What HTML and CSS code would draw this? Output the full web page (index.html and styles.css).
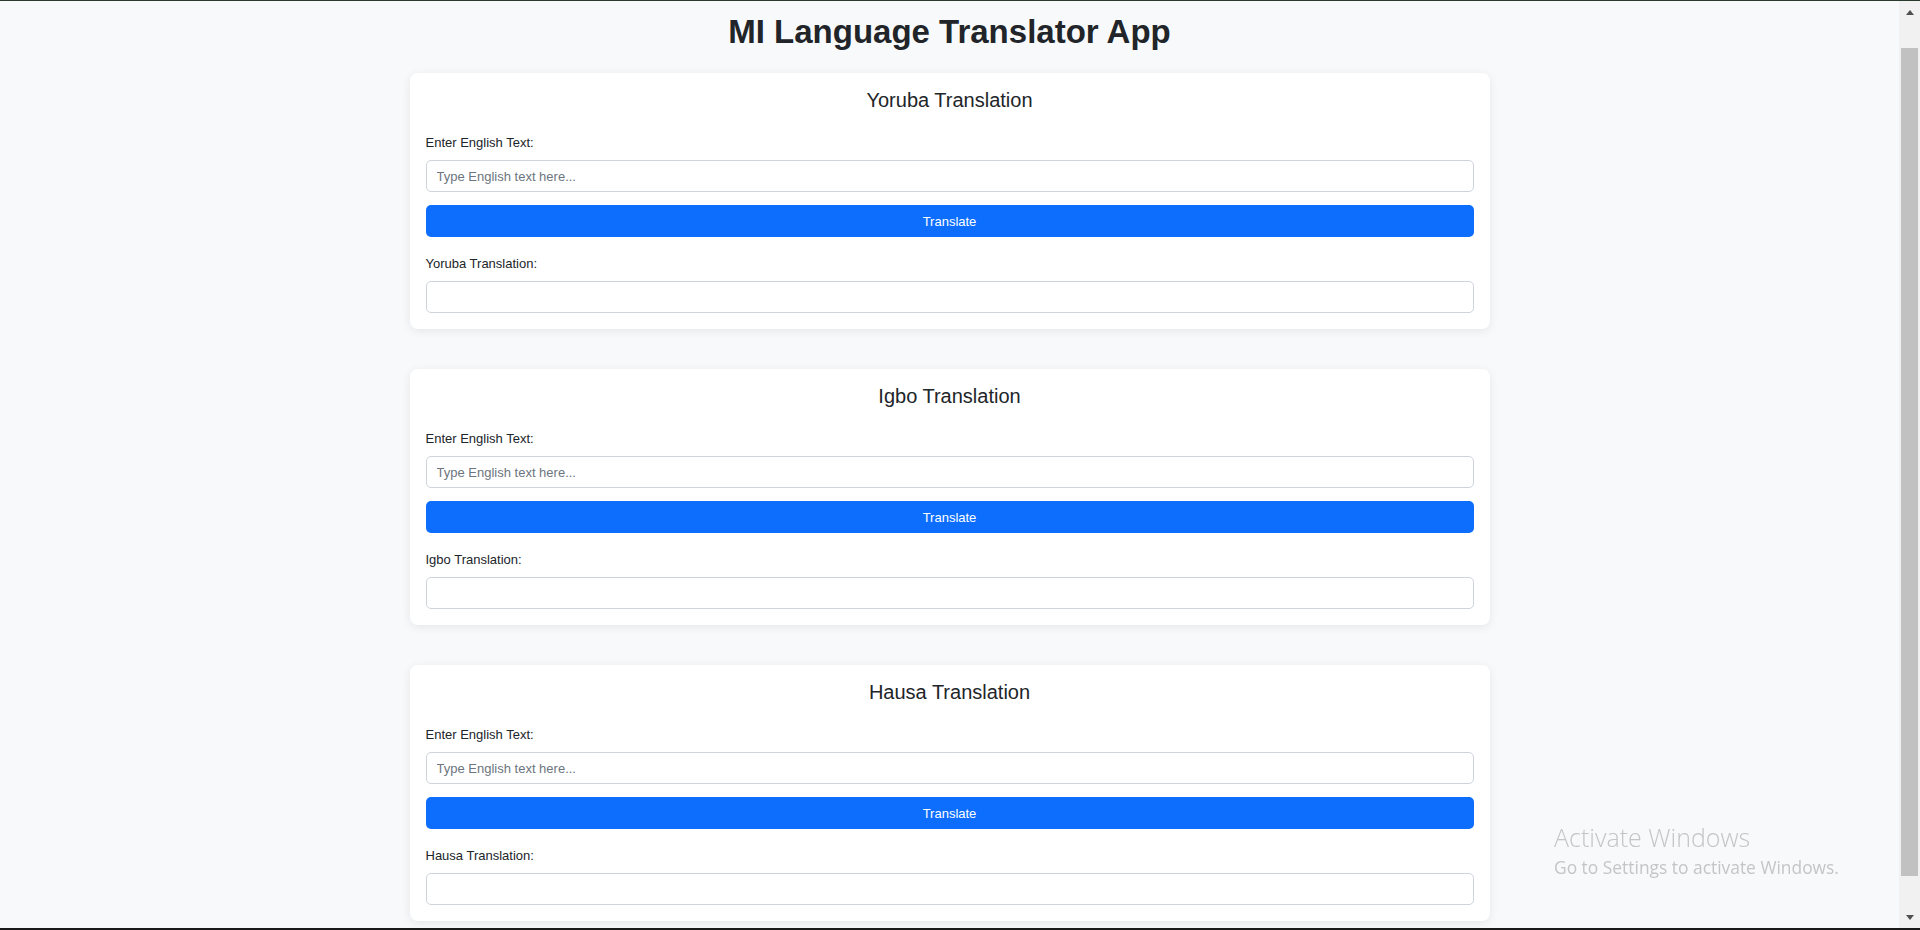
FILE: index.html
```html
<!DOCTYPE html>
<html lang="en">
<head>
<meta charset="utf-8">
<title>MI Language Translator App</title>
<link rel="stylesheet" href="styles.css">
</head>
<body>
<div class="topline"></div>
<div class="frame">
  <main class="page">
    <h1 class="app-title">MI Language Translator App</h1>

    <section class="card">
      <h2 class="card-title">Yoruba Translation</h2>
      <label class="field-label">Enter English Text:</label>
      <input class="field" type="text" placeholder="Type English text here...">
      <button class="btn">Translate</button>
      <label class="field-label">Yoruba Translation:</label>
      <input class="field out" type="text">
    </section>

    <section class="card">
      <h2 class="card-title">Igbo Translation</h2>
      <label class="field-label">Enter English Text:</label>
      <input class="field" type="text" placeholder="Type English text here...">
      <button class="btn">Translate</button>
      <label class="field-label">Igbo Translation:</label>
      <input class="field out" type="text">
    </section>

    <section class="card">
      <h2 class="card-title">Hausa Translation</h2>
      <label class="field-label">Enter English Text:</label>
      <input class="field" type="text" placeholder="Type English text here...">
      <button class="btn">Translate</button>
      <label class="field-label">Hausa Translation:</label>
      <input class="field out" type="text">
    </section>
  </main>
  <div class="scrollbar">
    <div class="arrow up"></div>
    <div class="thumb"></div>
    <div class="arrow down"></div>
  </div>
</div>
<div class="bottombar"></div>

<div class="watermark">
  <div class="wm-title">Activate Windows</div>
  <div class="wm-sub">Go to Settings to activate Windows.</div>
</div>
</body>
</html>
```

FILE: styles.css
```css
* { box-sizing: border-box; }

html, body {
  margin: 0;
  padding: 0;
  height: 930px;
  overflow: hidden;
}

body {
  background: #f8f9fa;
  font-family: "Liberation Sans", Arial, sans-serif;
  color: #212529;
  display: flex;
  flex-direction: column;
}

.topline {
  height: 1px;
  background: #2b3b2b;
  flex: none;
}

.bottombar {
  height: 2px;
  background: #1a1a1a;
  flex: none;
}

.frame {
  flex: 1;
  display: flex;
  min-height: 0;
}

.page {
  flex: 1;
  overflow: hidden;
  display: flex;
  flex-direction: column;
  align-items: center;
}

.app-title {
  margin: 12px 0 22px;
  font-size: 33px;
  line-height: 38px;
  font-weight: bold;
  color: #212529;
  text-align: center;
}

.card {
  width: 1080px;
  flex: none;
  background: #ffffff;
  border-radius: 8px;
  box-shadow: 0 2px 10px rgba(0, 0, 0, 0.08);
  padding: 16px;
  margin-bottom: 40px;
  display: flex;
  flex-direction: column;
}

.card-title {
  margin: 0 0 23px;
  font-size: 20px;
  line-height: 23px;
  font-weight: normal;
  text-align: center;
  color: #212529;
}

.field-label {
  display: block;
  font-size: 13px;
  line-height: 15px;
  margin-bottom: 10px;
  color: #212529;
}

.field {
  display: block;
  width: 100%;
  height: 32px;
  border: 1px solid #ced4da;
  border-radius: 5px;
  padding: 0 10px;
  font-family: "Liberation Sans", Arial, sans-serif;
  font-size: 13px;
  color: #212529;
  background: #fff;
  margin: 0 0 13px;
  outline: none;
}

.field::placeholder {
  color: #6c757d;
}

.field.out {
  margin-bottom: 0;
}

.btn {
  display: block;
  width: 100%;
  height: 32px;
  border: none;
  border-radius: 5px;
  background: #0d6efd;
  color: #ffffff;
  font-family: "Liberation Sans", Arial, sans-serif;
  font-size: 13px;
  margin: 0 0 19px;
  padding: 0;
}

.scrollbar {
  width: 21px;
  flex: none;
  background: #f1f1f1;
  display: flex;
  flex-direction: column;
  align-items: center;
  padding-top: 9px;
}

.arrow {
  width: 0;
  height: 0;
  border-left: 4.5px solid transparent;
  border-right: 4.5px solid transparent;
}

.arrow.up {
  border-bottom: 5px solid #505050;
}

.arrow.down {
  border-top: 5px solid #505050;
  margin-top: 39px;
}

.thumb {
  width: 17px;
  height: 828px;
  margin-top: 33px;
  background: #c1c1c1;
}

.watermark {
  position: fixed;
  left: 1554px;
  top: 822px;
  font-family: "Open Sans", "Noto Sans", sans-serif;
  color: #c4c5c7;
  pointer-events: none;
}

.wm-title {
  font-size: 25px;
  line-height: 30px;
  font-weight: 300;
}

.wm-sub {
  font-size: 17.4px;
  line-height: 22px;
  margin-top: 4px;
}
```
